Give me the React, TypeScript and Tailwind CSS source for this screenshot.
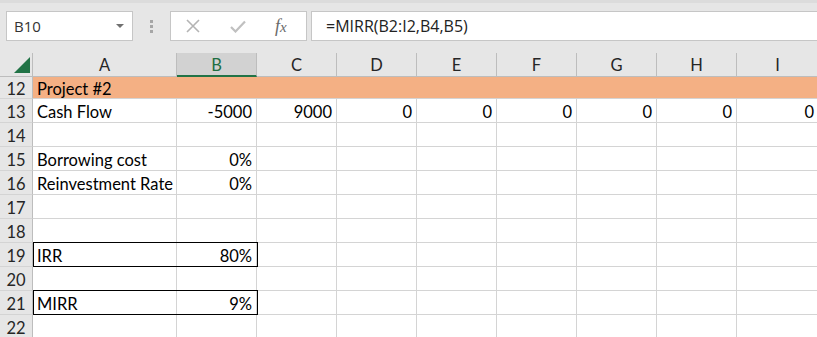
import React from "react";

const cols = ["A", "B", "C", "D", "E", "F", "G", "H", "I"];
const widths = ["w-[144px]", "w-[80px]", "w-[80px]", "w-[80px]", "w-[80px]", "w-[80px]", "w-[80px]", "w-[80px]", "w-[82px]"];

type Row = {
  n: number;
  cells?: string[];
  orange?: boolean;
  boxed?: boolean;
  h?: string;
};

const rows: Row[] = [
  { n: 12, cells: ["Project #2"], orange: true, h: "h-[22px]" },
  { n: 13, cells: ["Cash Flow", "-5000", "9000", "0", "0", "0", "0", "0", "0"] },
  { n: 14 },
  { n: 15, cells: ["Borrowing cost", "0%"] },
  { n: 16, cells: ["Reinvestment Rate", "0%"] },
  { n: 17 },
  { n: 18 },
  { n: 19, cells: ["IRR", "80%"], boxed: true },
  { n: 20 },
  { n: 21, cells: ["MIRR", "9%"], boxed: true },
  { n: 22 },
];

function Toolbar() {
  return (
    <div className="h-[53px] bg-[#e6e6e6] flex items-start pt-[11px] pl-[6px] border-t-[3px] border-[#dcdcdc]">
      <div className="-mt-[3px] w-[127px] h-[30px] bg-white border border-[#c6c6c6] flex items-center justify-between pl-[7px] pr-[8px]">
        <span className="text-[15px] text-[#333] font-['Open_Sans',sans-serif]">B10</span>
        <svg width="8" height="4" viewBox="0 0 8 4">
          <path d="M0 0 H8 L4 4 Z" fill="#707070" />
        </svg>
      </div>
      <div className="-mt-[3px] w-[37px] h-[30px] flex flex-col items-center justify-center gap-[2px]">
        <span className="w-[3px] h-[3px] bg-[#a6a6a6]" />
        <span className="w-[3px] h-[3px] bg-[#a6a6a6]" />
        <span className="w-[3px] h-[3px] bg-[#a6a6a6]" />
      </div>
      <div className="-mt-[3px] w-[137px] h-[30px] bg-white border border-[#c6c6c6] flex items-center">
        <svg className="ml-[15px]" width="14" height="14" viewBox="0 0 14 14">
          <path d="M1 1 L13 13 M13 1 L1 13" stroke="#b4b4b4" strokeWidth="1.6" />
        </svg>
        <svg className="ml-[30px]" width="16" height="13" viewBox="0 0 16 13">
          <path d="M1 7 L5.5 11.5 L15 1.5" stroke="#c0c0c0" strokeWidth="2.2" fill="none" />
        </svg>
        <span className="ml-[29px] text-[18px] italic text-[#6a6a6a] font-['Liberation_Serif',serif] leading-none">
          f<span className="text-[15px]">x</span>
        </span>
      </div>
      <div className="-mt-[3px] ml-[4px] flex-1 h-[30px] bg-white border border-[#c6c6c6] border-r-0 flex items-center pl-[14px]">
        <span className="text-[16px] text-[#222] font-['Open_Sans',sans-serif]">=MIRR(B2:I2,B4,B5)</span>
      </div>
    </div>
  );
}

function HeaderRow() {
  return (
    <div className="flex h-[24px] bg-[#e6e6e6]">
      <div className="w-[33px] shrink-0 border-r border-[#bdbdbd] border-b border-b-[#bdbdbd] relative">
        <svg className="absolute left-[14px] top-[4px]" width="16" height="16" viewBox="0 0 16 16">
          <path d="M16 0 V16 H0 Z" fill="#217346" />
        </svg>
      </div>
      {cols.map((c, i) => (
        <div
          key={c}
          className={`${widths[i]} shrink-0 flex items-center justify-center pt-[2px] border-r border-[#bdbdbd] text-[16.5px] ${
            c === "B"
              ? "bg-[#d2d2d2] text-[#1e6e42] border-b-2 border-b-[#217346]"
              : "text-[#262626] border-b border-b-[#bdbdbd]"
          }`}
        >
          {c}
        </div>
      ))}
    </div>
  );
}

function SheetRow({ row }: { row: Row }) {
  const h = row.h ?? "h-[24px]";
  return (
    <div className={`flex ${h} relative`}>
      <div className="w-[33px] shrink-0 bg-[#e6e6e6] border-r border-[#bdbdbd] border-b border-b-[#d4d4d4] flex items-center justify-center pt-[3px] text-[16.5px] text-[#262626]">
        {row.n}
      </div>
      {cols.map((c, i) => {
        const v = row.cells?.[i] ?? "";
        const left = i === 0;
        return (
          <div
            key={c}
            className={`${widths[i]} shrink-0 flex items-center pt-[3px] whitespace-nowrap text-[16.5px] text-black ${
              left ? "justify-start pl-[4px]" : "justify-end pr-[4px]"
            } ${
              row.orange
                ? "bg-[#f4b084] border-b border-[#d4d4d4]"
                : "bg-white border-r border-b border-[#d4d4d4]"
            }`}
          >
            {v}
          </div>
        );
      })}
      {row.boxed && (
        <div className="absolute left-[33px] -top-[1px] w-[225px] h-[25px] border border-black pointer-events-none" />
      )}
    </div>
  );
}

export default function App() {
  return (
    <div className="w-[817px] h-[337px] overflow-hidden bg-white font-['Lato',sans-serif]">
      <Toolbar />
      <HeaderRow />
      {rows.map((r) => (
        <SheetRow key={r.n} row={r} />
      ))}
    </div>
  );
}
